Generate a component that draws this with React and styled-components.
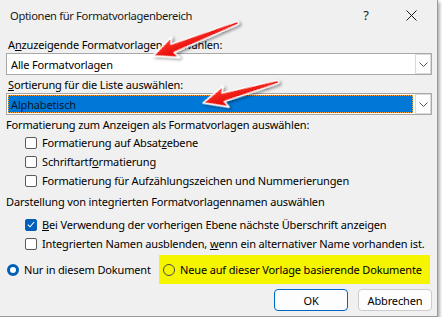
import React from 'react';
import styled, { createGlobalStyle } from 'styled-components';

const GlobalStyle = createGlobalStyle`
  html, body {
    margin: 0;
    background: #ffffff;
  }
`;

const App = () => (
  <>
    <GlobalStyle />
    <Dialog>
      <TitleBar>
        <Title>Optionen für Formatvorlagenbereich</Title>
        <HelpButton>?</HelpButton>
        <CloseButton>
          <svg width="11" height="11" viewBox="0 0 11 11">
            <path d="M0.5 0.5 L10.5 10.5 M10.5 0.5 L0.5 10.5" stroke="#1a1a1a" strokeWidth="1" />
          </svg>
        </CloseButton>
      </TitleBar>

      <Body>
        <Label $top={7}>A<u>n</u>zuzeigende Formatvorlagen auswählen:</Label>
        <Dropdown>
          <DropValue>Alle Formatvorlagen</DropValue>
          <DropButton><Chevron /></DropButton>
        </Dropdown>

        <Label $top={2}><u>S</u>ortierung für die Liste auswählen:</Label>
        <Dropdown>
          <DropValue $selected>Alphabetisch</DropValue>
          <DropButton><Chevron /></DropButton>
        </Dropdown>

        <Label $top={2} $flush>Formatierung zum Anzeigen als Formatvorlagen auswählen:</Label>
        <CheckRow>
          <Checkbox />
          <span>Formatierung auf Absat<u>z</u>ebene</span>
        </CheckRow>
        <CheckRow>
          <Checkbox />
          <span>Schriftartf<u>o</u>rmatierung</span>
        </CheckRow>
        <CheckRow>
          <Checkbox />
          <span>Formatierung für Aufzählungszeichen und Nummerierungen</span>
        </CheckRow>

        <Label $top={4} $flush>Darstellung von integrierten Formatvorlagennamen auswählen</Label>
        <CheckRow $top={5}>
          <Checkbox $checked>
            <svg width="8" height="7" viewBox="0 0 8 7">
              <path d="M0.8 3.6 L3 5.8 L7.2 1" fill="none" stroke="#fff" strokeWidth="1.1" />
            </svg>
          </Checkbox>
          <span><u>B</u>ei Verwendung der vorherigen Ebene nächste Überschrift anzeigen</span>
        </CheckRow>
        <CheckRow>
          <Checkbox />
          <span>Integrierten Namen ausblenden, <u>w</u>enn ein alternativer Name vorhanden ist.</span>
        </CheckRow>

        <RadioRow>
          <RadioOption>
            <Radio $checked />
            <span>Nur in diesem Dokument</span>
          </RadioOption>
          <Highlight>
            <Radio />
            <span>Neue auf dieser Vorlage basierende Dokumente</span>
          </Highlight>
        </RadioRow>

        <ButtonRow>
          <Button $primary>OK</Button>
          <Button>Abbrechen</Button>
        </ButtonRow>
      </Body>

      <Overlay width="438" height="317" viewBox="0 0 438 317">
        <defs>
          <linearGradient id="arrowFill" x1="0" y1="0" x2="0" y2="1">
            <stop offset="0" stopColor="#ff3a2a" />
            <stop offset="1" stopColor="#e00000" />
          </linearGradient>
          <filter id="arrowShadow" x="-20%" y="-40%" width="140%" height="180%">
            <feDropShadow dx="1.5" dy="2" stdDeviation="1.6" floodColor="#000" floodOpacity="0.45" />
          </filter>
        </defs>
        <Arrow x={153} y={56} angle={-21.4} length={90} />
        <Arrow x={203} y={103} angle={-15.8} length={77} />
      </Overlay>
    </Dialog>
  </>
);

export default App;

const Chevron = () => (
  <svg width="9" height="5" viewBox="0 0 9 5">
    <path d="M0.5 0.5 L4.5 4.5 L8.5 0.5" fill="none" stroke="#555" strokeWidth="1" />
  </svg>
);

const Arrow = ({ x, y, angle, length }) => {
  const L = length;
  const d = `M0 0 L24 -11 L21 -4.5 L${L} -1.6 A1.6 1.6 0 0 1 ${L} 1.6 L21 4.5 L24 11 Z`;
  return (
    <g transform={`translate(${x} ${y}) rotate(${angle})`} filter="url(#arrowShadow)">
      <path d={d} fill="url(#arrowFill)" stroke="#fff" strokeWidth="1.4" strokeLinejoin="round" />
    </g>
  );
};

const Dialog = styled.div`
  position: relative;
  width: 438px;
  height: 317px;
  box-sizing: border-box;
  background: #f0f0f0;
  border-right: 1px solid #9a9a9a;
  border-bottom: 1px solid #9a9a9a;
  box-shadow: 2px 2px 3px rgba(0, 0, 0, 0.3);
  font-family: "Noto Sans", "DejaVu Sans", sans-serif;
  font-size: 11px;
  letter-spacing: -0.15px;
  color: #000;
  display: flex;
  flex-direction: column;
`;

const TitleBar = styled.div`
  height: 30px;
  display: flex;
  align-items: center;
  padding-left: 10px;
  font-size: 11.2px;
  letter-spacing: -0.35px;
`;

const Title = styled.div`
  flex: 1;
  color: #1a1a1a;
`;

const HelpButton = styled.div`
  width: 46px;
  text-align: center;
  font-size: 13px;
  color: #1a1a1a;
`;

const CloseButton = styled.div`
  width: 44px;
  display: flex;
  justify-content: center;
  align-items: center;
  padding-right: 4px;
`;

const Body = styled.div`
  display: flex;
  flex-direction: column;
  padding: 0 5px 0 6px;
`;

const Label = styled.div`
  margin-top: ${p => p.$top || 0}px;
  padding-left: ${p => (p.$flush ? 0 : 2)}px;
  height: 16px;
  line-height: 16px;
  white-space: nowrap;
`;

const Dropdown = styled.div`
  height: 22px;
  box-sizing: border-box;
  border: 1px solid #a8a8a8;
  background: #fff;
  display: flex;
  padding: 1px;
`;

const DropValue = styled.div`
  flex: 1;
  display: flex;
  align-items: center;
  padding-left: 3px;
  margin-right: 2px;
  background: ${p => (p.$selected ? '#0078d7' : 'transparent')};
  outline: ${p => (p.$selected ? '1px dotted #f5a030' : 'none')};
  outline-offset: -1px;
  color: ${p => (p.$selected ? '#0b1530' : '#000')};
`;

const DropButton = styled.div`
  width: 16px;
  box-sizing: border-box;
  border: 1px solid #dadada;
  margin: -1px -1px -1px 0;
  display: flex;
  align-items: center;
  justify-content: center;
  background: #fff;
`;

const CheckRow = styled.div`
  margin-top: ${p => p.$top || 0}px;
  height: 19px;
  display: flex;
  align-items: center;
  gap: 5px;
  padding-left: 19px;
  white-space: nowrap;
`;

const Checkbox = styled.div`
  width: 12px;
  height: 12px;
  box-sizing: border-box;
  border-radius: 2px;
  border: 1px solid ${p => (p.$checked ? '#005fb8' : '#5a5a5a')};
  background: ${p => (p.$checked ? '#005fb8' : '#fff')};
  display: flex;
  align-items: center;
  justify-content: center;
  flex-shrink: 0;
`;

const RadioRow = styled.div`
  margin-top: 2px;
  height: 29px;
  display: flex;
  align-items: center;
`;

const RadioOption = styled.div`
  display: flex;
  align-items: center;
  gap: 5px;
  padding-left: 1px;
  white-space: nowrap;
`;

const Highlight = styled.div`
  margin-left: auto;
  margin-right: 2px;
  width: 271px;
  height: 100%;
  box-sizing: border-box;
  background: #f5f500;
  display: flex;
  align-items: center;
  gap: 5px;
  padding-left: 4px;
  white-space: nowrap;
`;

const Radio = styled.div`
  width: 12px;
  height: 12px;
  box-sizing: border-box;
  border-radius: 50%;
  border: ${p => (p.$checked ? '3.5px solid #005fb8' : '1px solid #4a4a4a')};
  background: ${p => (p.$checked ? '#fff' : 'transparent')};
  flex-shrink: 0;
`;

const ButtonRow = styled.div`
  margin-top: 5px;
  display: flex;
  justify-content: flex-end;
  gap: 10px;
`;

const Button = styled.div`
  width: 74px;
  height: 22px;
  box-sizing: border-box;
  border-radius: 4px;
  border: 1px solid ${p => (p.$primary ? '#0067c0' : '#cccccc')};
  background: #fdfdfd;
  display: flex;
  align-items: center;
  justify-content: center;
`;

const Overlay = styled.svg`
  position: absolute;
  left: 0;
  top: 0;
  pointer-events: none;
`;
